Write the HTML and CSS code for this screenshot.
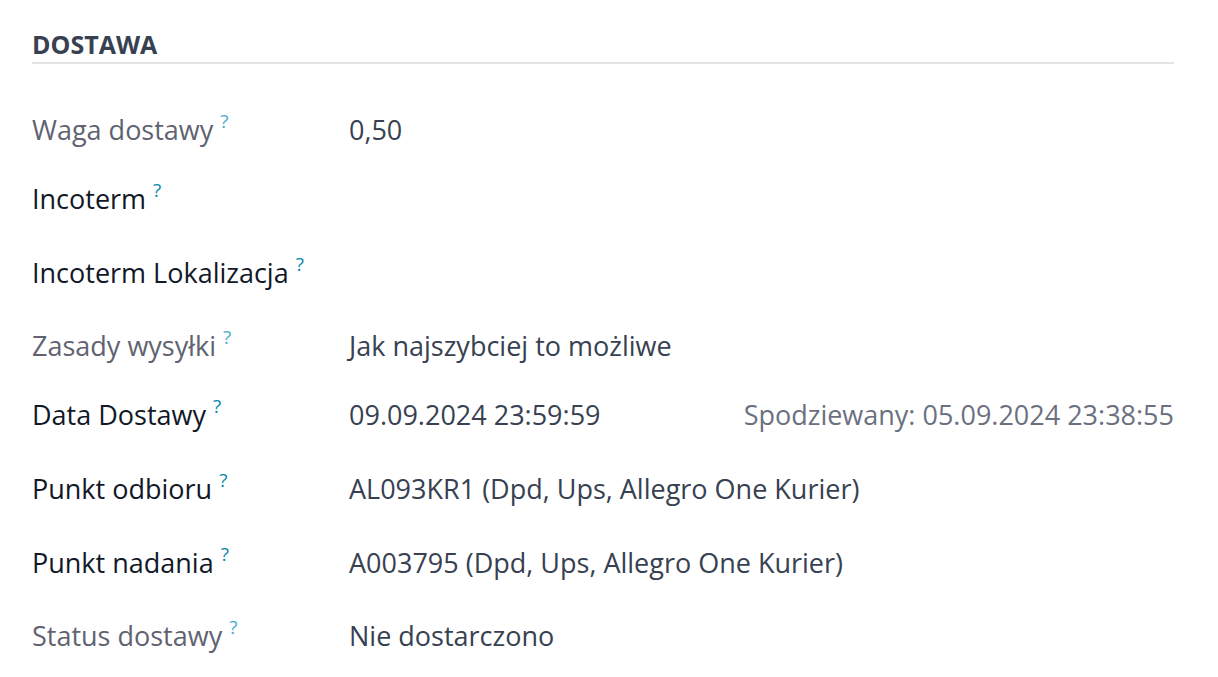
FILE: index.html
```html
<!DOCTYPE html>
<html lang="pl">
<head>
<meta charset="utf-8">
<title>Dostawa</title>
<link rel="stylesheet" href="styles.css">
</head>
<body>
<section class="group">
  <h2 class="group-title">DOSTAWA</h2>
  <div class="rows">
    <div class="row ro">
      <div class="label">Waga dostawy<sup>?</sup></div>
      <div class="value">0,50</div>
    </div>
    <div class="row ed">
      <div class="label">Incoterm<sup>?</sup></div>
      <div class="value"></div>
    </div>
    <div class="row ed">
      <div class="label">Incoterm Lokalizacja<sup>?</sup></div>
      <div class="value"></div>
    </div>
    <div class="row ro">
      <div class="label">Zasady wysyłki<sup>?</sup></div>
      <div class="value">Jak najszybciej to możliwe</div>
    </div>
    <div class="row ed">
      <div class="label">Data Dostawy<sup>?</sup></div>
      <div class="value split"><span>09.09.2024 23:59:59</span><span class="muted">Spodziewany: 05.09.2024 23:38:55</span></div>
    </div>
    <div class="row ed">
      <div class="label">Punkt odbioru<sup>?</sup></div>
      <div class="value">AL093KR1 (Dpd, Ups, Allegro One Kurier)</div>
    </div>
    <div class="row ed">
      <div class="label">Punkt nadania<sup>?</sup></div>
      <div class="value">A003795 (Dpd, Ups, Allegro One Kurier)</div>
    </div>
    <div class="row ro">
      <div class="label">Status dostawy<sup>?</sup></div>
      <div class="value">Nie dostarczono</div>
    </div>
  </div>
</section>
</body>
</html>
```

FILE: styles.css
```css
html, body {
  margin: 0;
  padding: 0;
  background: #ffffff;
}
body {
  font-family: "Open Sans", "Noto Sans", sans-serif;
  font-size: 27px;
  color: #374151;
}
.group {
  padding: 26px 44px 0 32px;
}
.group-title {
  margin: 0;
  font-size: 25px;
  font-weight: 700;
  line-height: 36px;
  color: #374151;
  border-bottom: 2px solid #e4e4e4;
}
.rows {
  margin-top: 30px;
  display: flex;
  flex-direction: column;
}
.row {
  display: flex;
  align-items: center;
  line-height: 36px;
  height: 36px;
}
.row.ro {
  padding: 18px 0 14px;
}
.row.ed {
  padding: 19px 0 19px;
}
.label {
  width: 317px;
  flex: none;
  color: #111827;
}
.row.ro .label {
  color: #5f6371;
}
.label sup {
  font-size: 19px;
  line-height: 0;
  vertical-align: baseline;
  margin-left: 7px;
  color: #0b87ad;
  position: relative;
  top: -12px;
}
.row.ro .label sup {
  color: #4aadc8;
}
.value {
  flex: 1;
  color: #374151;
}
.value.split {
  display: flex;
  justify-content: space-between;
}
.muted {
  color: #6b7080;
}
```
